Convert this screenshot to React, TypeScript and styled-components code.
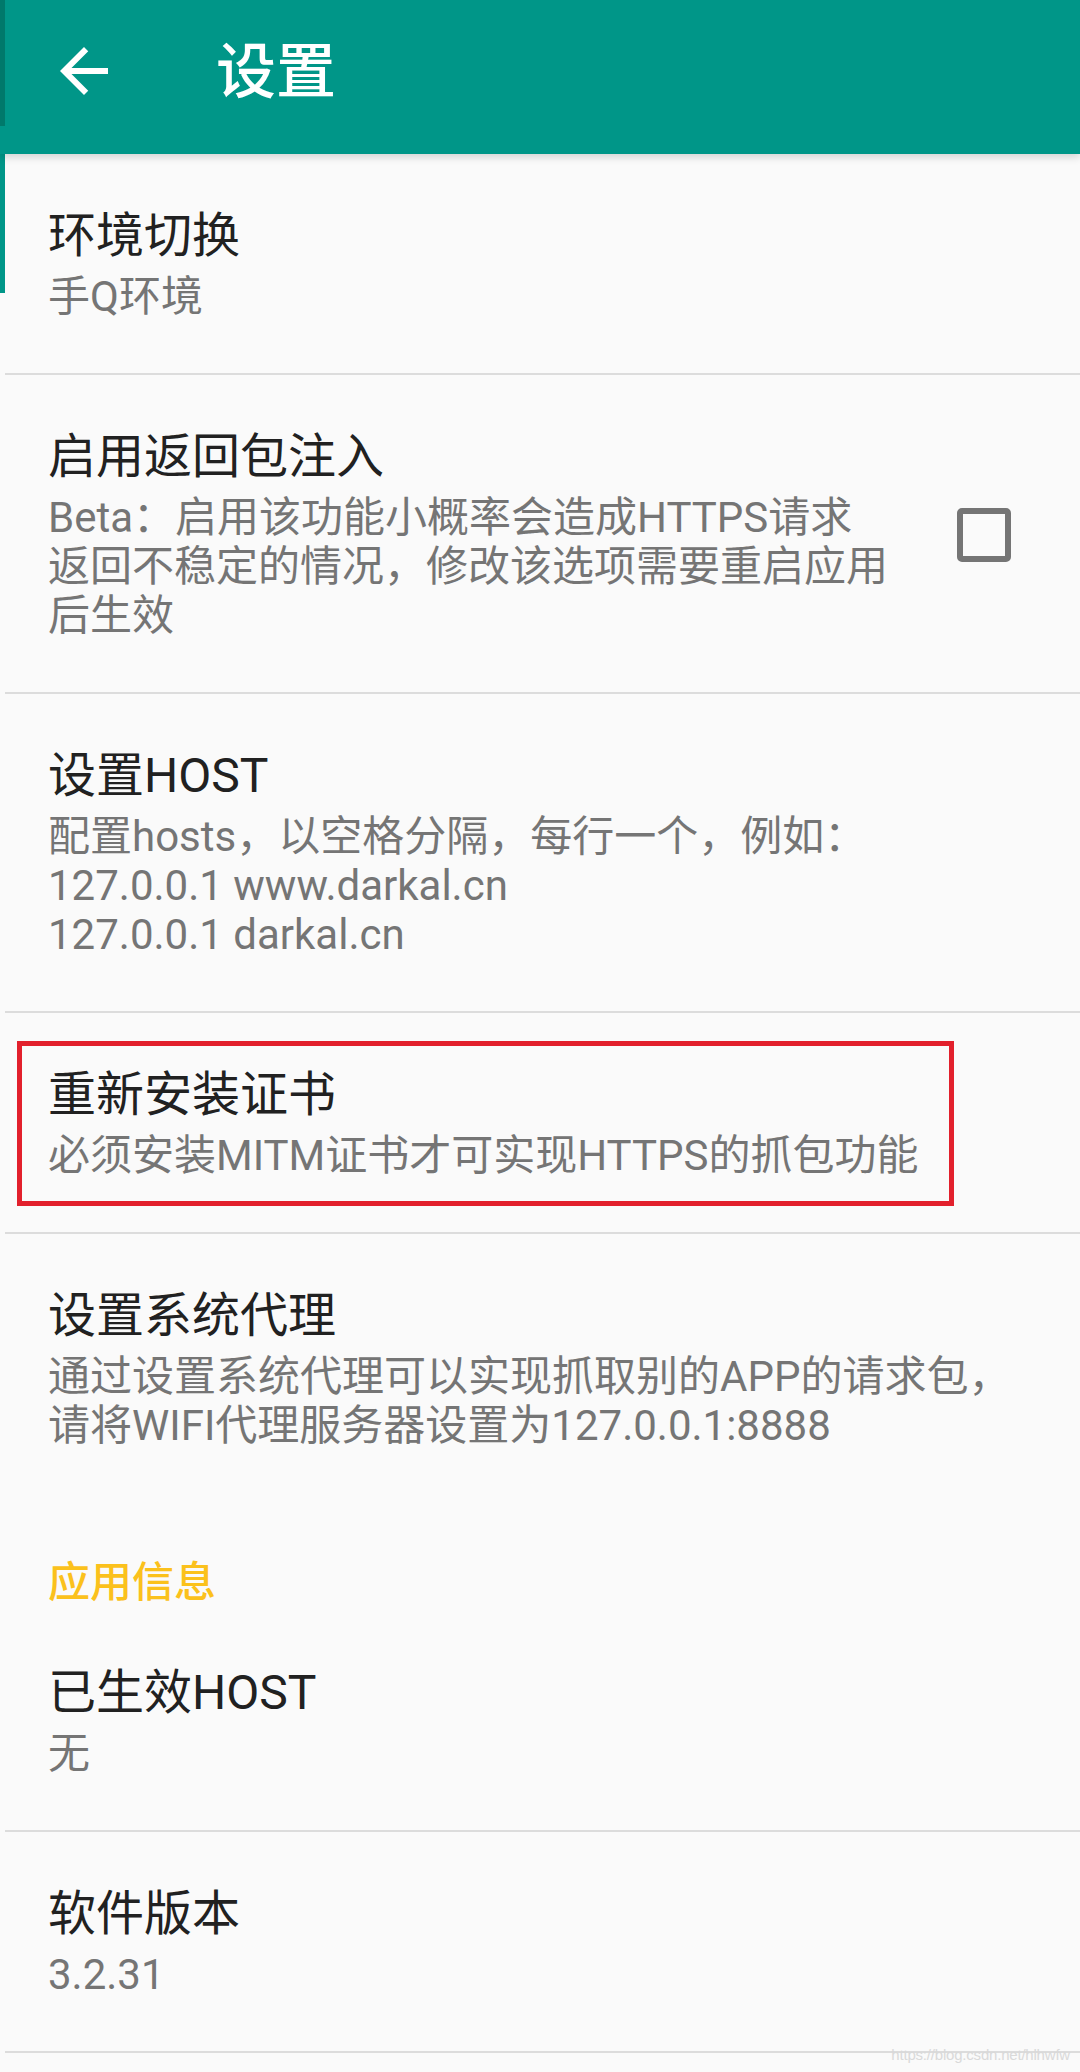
import React from 'react';
import styled, { createGlobalStyle } from 'styled-components';

interface PreferenceItem {
    title: string;
    summary: string[];
    checkbox?: boolean;
    highlighted?: boolean;
    divider?: boolean;
}

interface PreferenceGroup {
    label?: string;
    items: PreferenceItem[];
}

const groups: PreferenceGroup[] = [
    {
        items: [
            { title: '环境切换', summary: ['手Q环境'] },
            {
                title: '启用返回包注入',
                summary: ['Beta：启用该功能小概率会造成HTTPS请求', '返回不稳定的情况，修改该选项需要重启应用', '后生效'],
                checkbox: true,
            },
            {
                title: '设置HOST',
                summary: ['配置hosts，以空格分隔，每行一个，例如：', '127.0.0.1 www.darkal.cn', '127.0.0.1 darkal.cn'],
            },
            { title: '重新安装证书', summary: ['必须安装MITM证书才可实现HTTPS的抓包功能'], highlighted: true },
            {
                title: '设置系统代理',
                summary: ['通过设置系统代理可以实现抓取别的APP的请求包，', '请将WIFI代理服务器设置为127.0.0.1:8888'],
                divider: false,
            },
        ],
    },
    {
        label: '应用信息',
        items: [
            { title: '已生效HOST', summary: ['无'] },
            { title: '软件版本', summary: ['3.2.31'] },
        ],
    },
];

const BackArrow: React.FC = () => (
    <svg width="72" height="72" viewBox="0 0 24 24" fill="#ffffff">
        <path d="M20 11H7.83l5.59-5.59L12 4l-8 8 8 8 1.41-1.41L7.83 13H20v-2z" />
    </svg>
);

const Preference: React.FC<{ item: PreferenceItem }> = ({ item }) => (
    <>
        <Row>
            <TextColumn>
                <Title>{item.title}</Title>
                <Summary>
                    {item.summary.map(line => (
                        <SummaryLine key={line}>{line}</SummaryLine>
                    ))}
                </Summary>
            </TextColumn>
            {item.checkbox && <CheckBox />}
            {item.highlighted && <Highlight />}
        </Row>
        {item.divider !== false && <Divider />}
    </>
);

const App: React.FC = () => {
    return (
        <Page>
            <GlobalStyle />
            <Toolbar>
                <DrawerShade />
                <BackButton>
                    <BackArrow />
                </BackButton>
                <ToolbarTitle>设置</ToolbarTitle>
            </Toolbar>
            <List>
                <EdgeMark />
                {groups.map((group, i) => (
                    <section key={i}>
                        {group.label && <CategoryLabel>{group.label}</CategoryLabel>}
                        {group.items.map(item => (
                            <Preference key={item.title} item={item} />
                        ))}
                    </section>
                ))}
            </List>
            <Watermark>https://blog.csdn.net/hlhwfw</Watermark>
        </Page>
    );
};

const GlobalStyle = createGlobalStyle`
    html, body {
        margin: 0;
        padding: 0;
        background: #fafafa;
    }
    body {
        font-family: Roboto, "Noto Sans CJK SC", sans-serif;
    }
`;

const Page = styled.div`
    position: relative;
    width: 1080px;
    min-height: 2072px;
    background: #fafafa;
    overflow: hidden;
`;

const Toolbar = styled.header`
    position: relative;
    z-index: 2;
    display: flex;
    align-items: center;
    height: 154px;
    padding: 0 0 8px 48px;
    box-sizing: border-box;
    background: #009688;
    box-shadow: 0 3px 8px rgba(0, 0, 0, 0.16);
`;

const DrawerShade = styled.div`
    position: absolute;
    left: 0;
    top: 0;
    width: 5px;
    height: 126px;
    background: #00796b;
`;

const BackButton = styled.div`
    display: flex;
    width: 72px;
    height: 72px;
    margin-bottom: 4px;
`;

const ToolbarTitle = styled.h1`
    margin: 0 0 0 96px;
    font-size: 60px;
    font-weight: 500;
    line-height: 64px;
    color: #ffffff;
`;

const List = styled.main`
    position: relative;
`;

const EdgeMark = styled.div`
    position: absolute;
    left: 0;
    top: 0;
    width: 5px;
    height: 139px;
    background: #009688;
`;

const CategoryLabel = styled.h2`
    margin: 0;
    padding: 56px 48px 4px 48px;
    font-size: 42px;
    font-weight: 500;
    line-height: 49px;
    color: #fbc11c;
`;

const Row = styled.div`
    position: relative;
    display: flex;
    align-items: center;
    padding: 54px 69px 52px 48px;
`;

const TextColumn = styled.div`
    flex: 1;
    min-width: 0;
`;

const Title = styled.div`
    font-size: 48px;
    line-height: 56px;
    color: #212121;
    white-space: nowrap;
`;

const Summary = styled.div`
    margin-top: 8px;
    font-size: 42px;
    line-height: 49px;
    color: #757575;
`;

const SummaryLine = styled.div`
    white-space: nowrap;
`;

const CheckBox = styled.span`
    flex: none;
    width: 54px;
    height: 54px;
    box-sizing: border-box;
    border: 6px solid #757575;
    border-radius: 5px;
`;

const Highlight = styled.div`
    position: absolute;
    left: 17px;
    top: 28px;
    width: 937px;
    height: 165px;
    box-sizing: border-box;
    border: 5px solid #e2202c;
    pointer-events: none;
`;

const Divider = styled.hr`
    margin: 0 0 0 5px;
    border: 0;
    height: 2px;
    background: #dcdcdc;
`;

const Watermark = styled.div`
    position: absolute;
    right: 10px;
    bottom: 9px;
    font-family: "Liberation Sans", sans-serif;
    font-size: 15px;
    color: #d9d9d9;
    letter-spacing: -0.2px;
`;

export default App;
